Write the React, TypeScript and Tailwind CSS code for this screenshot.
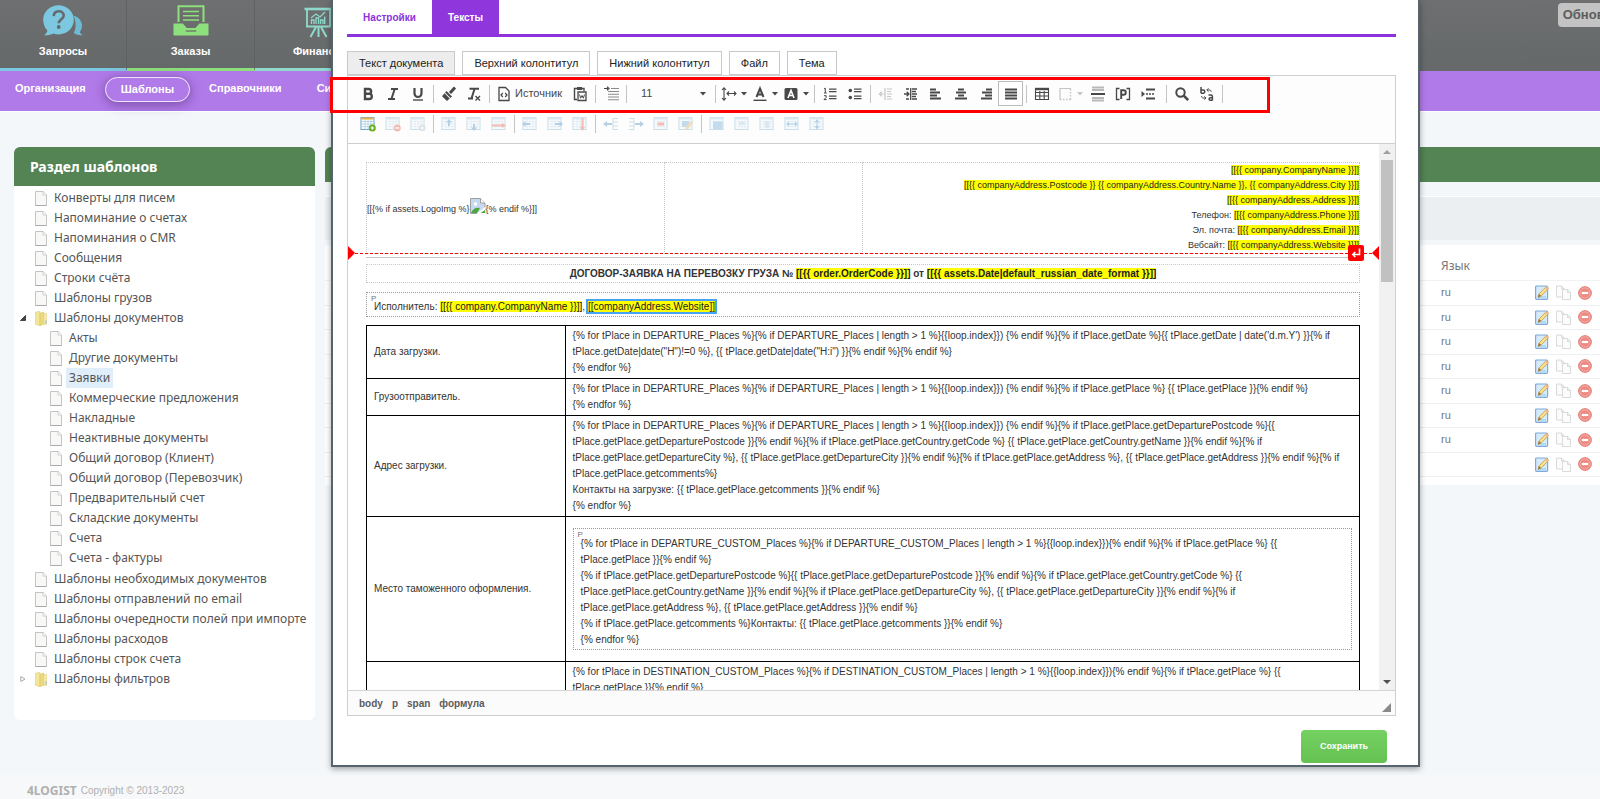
import React, { useState } from 'react';

interface TreeNode {
  label: string;
  open?: boolean;
  folder?: boolean;
  children?: TreeNode[];
}

const TREE: TreeNode[] = [
  { label: 'Конверты для писем' },
  { label: 'Напоминание о счетах' },
  { label: 'Напоминания о CMR' },
  { label: 'Сообщения' },
  { label: 'Строки счёта' },
  { label: 'Шаблоны грузов' },
  {
    label: 'Шаблоны документов',
    folder: true,
    open: true,
    children: [
      { label: 'Акты' },
      { label: 'Другие документы' },
      { label: 'Заявки' },
      { label: 'Коммерческие предложения' },
      { label: 'Накладные' },
      { label: 'Неактивные документы' },
      { label: 'Общий договор (Клиент)' },
      { label: 'Общий договор (Перевозчик)' },
      { label: 'Предварительный счет' },
      { label: 'Складские документы' },
      { label: 'Счета' },
      { label: 'Счета - фактуры' },
    ],
  },
  { label: 'Шаблоны необходимых документов' },
  { label: 'Шаблоны отправлений по email' },
  { label: 'Шаблоны очередности полей при импорте' },
  { label: 'Шаблоны расходов' },
  { label: 'Шаблоны строк счета' },
  { label: 'Шаблоны фильтров', folder: true },
];

const LANGS = ['ru', 'ru', 'ru', 'ru', 'ru', 'ru', 'ru', ''];

const DOC_TABS = ['Текст документа', 'Верхний колонтитул', 'Нижний колонтитул', 'Файл', 'Тема'];

const ADDRESS = [
  { label: '', value: '[[{{ company.CompanyName }}]]' },
  { label: '', value: '[[{{ companyAddress.Postcode }} {{ companyAddress.Country.Name }}, {{ companyAddress.City }}]]' },
  { label: '', value: '[[{{ companyAddress.Address }}]]' },
  { label: 'Телефон: ', value: '[[{{ companyAddress.Phone }}]]' },
  { label: 'Эл. почта: ', value: '[[{{ companyAddress.Email }}]]' },
  { label: 'Вебсайт: ', value: '[[{{ companyAddress.Website }}]]' },
];

const DOC_ROWS = [
  {
    title: 'Дата загрузки.',
    lines: [
      "{% for tPlace in DEPARTURE_Places %}{% if DEPARTURE_Places | length > 1 %}{{loop.index}}) {% endif %}{% if tPlace.getDate %}{{ tPlace.getDate | date('d.m.Y') }}{% if",
      'tPlace.getDate|date("H")!=0 %}, {{ tPlace.getDate|date("H:i") }}{% endif %}{% endif %}',
      '{% endfor %}',
    ],
  },
  {
    title: 'Грузоотправитель.',
    lines: [
      '{% for tPlace in DEPARTURE_Places %}{% if DEPARTURE_Places | length > 1 %}{{loop.index}}) {% endif %}{% if tPlace.getPlace %} {{ tPlace.getPlace }}{% endif %}',
      '{% endfor %}',
    ],
  },
  {
    title: 'Адрес загрузки.',
    lines: [
      '{% for tPlace in DEPARTURE_Places %}{% if DEPARTURE_Places | length > 1 %}{{loop.index}}) {% endif %}{% if tPlace.getPlace.getDeparturePostcode %}{{',
      'tPlace.getPlace.getDeparturePostcode }}{% endif %}{% if tPlace.getPlace.getCountry.getCode %} {{ tPlace.getPlace.getCountry.getName }}{% endif %}{% if',
      'tPlace.getPlace.getDepartureCity %}, {{ tPlace.getPlace.getDepartureCity }}{% endif %}{% if tPlace.getPlace.getAddress %}, {{ tPlace.getPlace.getAddress }}{% endif %}{% if',
      'tPlace.getPlace.getcomments%}',
      'Контакты на загрузке: {{ tPlace.getPlace.getcomments }}{% endif %}',
      '{% endfor %}',
    ],
  },
  {
    title: 'Место таможенного оформления.',
    boxed: true,
    lines: [
      '{% for tPlace in DEPARTURE_CUSTOM_Places %}{% if DEPARTURE_CUSTOM_Places | length > 1 %}{{loop.index}}){% endif %}{% if tPlace.getPlace %} {{',
      'tPlace.getPlace }}{% endif %}',
      '{% if tPlace.getPlace.getDeparturePostcode %}{{ tPlace.getPlace.getDeparturePostcode }}{% endif %}{% if tPlace.getPlace.getCountry.getCode %} {{',
      'tPlace.getPlace.getCountry.getName }}{% endif %}{% if tPlace.getPlace.getDepartureCity %}, {{ tPlace.getPlace.getDepartureCity }}{% endif %}{% if',
      'tPlace.getPlace.getAddress %}, {{ tPlace.getPlace.getAddress }}{% endif %}',
      '{% if tPlace.getPlace.getcomments %}Контакты: {{ tPlace.getPlace.getcomments }}{% endif %}',
      '{% endfor %}',
    ],
  },
  {
    title: '',
    lines: [
      '{% for tPlace in DESTINATION_CUSTOM_Places %}{% if DESTINATION_CUSTOM_Places | length > 1 %}{{loop.index}}){% endif %}{% if tPlace.getPlace %} {{',
      'tPlace.getPlace }}{% endif %}',
    ],
  },
];

/* ---------- icons ---------- */

const Icon = ({ children, dim }: { children: React.ReactNode; dim?: boolean }) => (
  <svg
    viewBox="0 0 16 16"
    className={`size-4 shrink-0 ${dim ? 'opacity-30' : ''}`}
    fill="none"
    stroke="#484848"
    strokeWidth="1.6"
    aria-hidden="true"
  >
    {children}
  </svg>
);

const Caret = ({ dim }: { dim?: boolean }) => (
  <svg viewBox="0 0 6 4" className={`h-1 w-1.5 shrink-0 ${dim ? 'opacity-30' : ''}`} fill="#484848" aria-hidden="true">
    <path d="M0 0h6L3 3.6z" />
  </svg>
);

const PageIcon = () => (
  <svg viewBox="0 0 12 15" className="h-[15px] w-3 shrink-0" aria-hidden="true">
    <path d="M.5.5h7.6l3.4 3.4v10.6H.5z" fill="#f8f8f6" stroke="#c4c4c4" />
    <path d="M8 .8V4h3.3" fill="#fff" stroke="#c4c4c4" strokeWidth=".8" />
    <path d="M.5 14.5h11" stroke="#a9a9a9" />
  </svg>
);

const FolderIcon = () => (
  <svg viewBox="0 0 12 15" className="h-[15px] w-3 shrink-0" aria-hidden="true">
    <path d="M0 1.5 4.8.2v14.6L0 13z" fill="#f3e59a" stroke="#e0cd74" strokeWidth=".6" />
    <path d="M5 2.2 8.6 1v12.2L5 14.6z" fill="#ecd980" stroke="#d9c363" strokeWidth=".6" />
    <path d="M8.8 2.5h2.7v10.8H8.8z" fill="#f6ecb4" stroke="#e0cd74" strokeWidth=".6" />
    <path d="M10.3 9.6h1.4v3h-1.4z" fill="#9cc7dc" />
  </svg>
);

const ChatIcon = () => (
  <svg viewBox="0 0 40 31" className="h-[31px] w-10" aria-hidden="true">
    <path d="M30.5 10.5c5 1.400 8.500 5.500 8.500 10.300 0 2.400-.8 4.400-2.100 6.100.4 1.300 1.300 2.300 2.800 3.300-3 .3-6-.2-8.200-1.600l-.8-.4c2.300-3.800 2.800-11.200-.2-17.700z" fill="#6fb9d3" />
    <path d="M15.500.2C24 .2 30.800 6.600 30.800 14.800S24 29.400 15.500 29.400c-1.800 0-3.400-.2-5-.8-2.600 1.300-6 2-9.800 1.700 2-1.200 3.300-2.800 3.700-4.900C1.600 22.700.2 19 .2 14.800.2 6.600 7 .2 15.500.2z" fill="#7cc8e0" />
    <path d="M10.700 11.100c.2-3 2.200-4.800 5-4.800s5 1.700 5 4.200c0 4-5 4-5 7.700" fill="none" stroke="#666969" strokeWidth="2.600" />
    <circle cx="15.700" cy="22" r="1.900" fill="#666969" />
  </svg>
);

const InboxIcon = () => (
  <svg viewBox="0 0 36 31" className="h-[31px] w-9" aria-hidden="true">
    <path d="M5.500 17V1.200h25V17" fill="none" stroke="#8ee07c" strokeWidth="2" />
    <path d="M10 6.500h16M10 10.700h16M10 15h16" stroke="#8ee07c" strokeWidth="1.400" />
    <path d="M.5 18.500h9.300l4 4.500h8.600l4-4.500h9.100v11.300c0 .4-.3.700-.7.700H1.200c-.4 0-.7-.3-.7-.7z" fill="#8ee07c" />
    <path d="M12.800 26h10.400" stroke="#666969" strokeWidth="1.200" />
  </svg>
);

const BoardIcon = () => (
  <svg viewBox="0 0 29 31" className="mt-0.5 h-[31px] w-[29px]" fill="none" stroke="#8fd9cc" aria-hidden="true">
    <path d="M.5 2h28" strokeWidth="2.600" />
    <path d="M3 3v16.500h23V3" strokeWidth="1.800" />
    <path d="m12 20-5.500 10M14.500 20v10M17 20l5.500 10" strokeWidth="2" />
    <path d="M7.500 17v-4h2.500v4M12 17v-6h2.500v6M16.500 17v-4h2.500v4M20.700 17V9.500" strokeWidth="1.300" />
    <path d="m7 11 5-4 4 3 5-5" strokeWidth="1.200" />
  </svg>
);

const EditIcon = () => (
  <svg viewBox="0 0 14 15" className="h-[15px] w-3.5" aria-hidden="true">
    <rect x=".6" y="1" width="12" height="13.300" rx="1" fill="#d6eafa" stroke="#7da9dc" strokeWidth="1.200" />
    <path d="M3 11h8v2H3z" fill="#a9dcf5" />
    <path d="m3 12.500.9-3.400L10.800 2c.9-.8 2.900.6 2.300 1.900L6.200 11z" fill="#fbe08a" stroke="#c99a4b" strokeWidth=".8" />
    <path d="m3 12.500.9-3.400 2.300 1.900z" fill="#8e744e" />
    <path d="M10.800 2c.9-.8 2.900.6 2.300 1.900l-1 1-2.200-1.900z" fill="#eebb8c" />
  </svg>
);

const CopyIcon = () => (
  <svg viewBox="0 0 15 15" className="size-[15px]" fill="#fcfcfc" stroke="#d6d6d6" strokeWidth=".9" aria-hidden="true">
    <path d="M.5 1h5L8 3.500V12H.5z" />
    <path d="M5.500 1v2.700H8" fill="none" />
    <path d="M6.500 4.500h5L14.500 7.300v7.200h-8z" />
    <path d="M11.500 4.500v3h3" fill="none" />
  </svg>
);

const DeleteIcon = () => (
  <svg viewBox="0 0 14 14" className="size-3.5" aria-hidden="true">
    <circle cx="7" cy="7" r="6.300" fill="#ee8a84" stroke="#dd6f69" />
    <circle cx="7" cy="7" r="5.200" fill="none" stroke="#f7bcb8" strokeWidth=".7" />
    <path d="M3.800 5.900h6.400v2.200H3.800z" fill="#fff" />
  </svg>
);

const GridIcon = ({ active, children }: { active?: boolean; children?: React.ReactNode }) => (
  <svg viewBox="0 0 16 16" className={`size-4 ${active ? '' : 'opacity-35'}`} fill="none" aria-hidden="true">
    <rect x="1" y="1.500" width="13" height="12" fill="#fff" stroke="#6ba3c8" />
    <path d="M1.500 5.500h12M1.500 8h12M1.500 10.700h12M5 3v10.500M8 3v10.500M11 3v10.500" stroke="#a9cbe3" strokeWidth=".8" />
    <path d="M1 1.500h13v2H1z" fill={active ? '#e8b64a' : '#9cc4e0'} />
    {children}
  </svg>
);

/* ---------- toolbar ---------- */

const ToolButton = ({ label, wide, on, children }: { label: string; wide?: boolean; on?: boolean; children: React.ReactNode }) => (
  <button
    type="button"
    aria-label={label}
    title={label}
    className={`flex h-[25px] shrink-0 items-center justify-center gap-1 ${wide ? 'w-[31px]' : 'w-[25px]'} ${
      on ? 'border border-[#bcbcbc] bg-white' : ''
    }`}
  >
    {children}
  </button>
);

const Separator = () => <span className="mx-[2px] h-[18px] w-0.5 shrink-0 border-r border-[#c4c4c4]" />;

const FormatToolbar = () => (
  <div className="flex items-center">
    <ToolButton label="Полужирный">
      <Icon>
        <path d="M5 3v10h4.200a2.600 2.600 0 0 0 0-5.200H5h3.700a2.400 2.400 0 0 0 0-4.800z" strokeWidth="2.400" />
      </Icon>
    </ToolButton>
    <ToolButton label="Курсив">
      <Icon>
        <path d="M6 3h7M3 13h7M9.700 3 6.400 13" strokeWidth="2" />
      </Icon>
    </ToolButton>
    <ToolButton label="Подчеркнутый">
      <Icon>
        <path d="M4.500 2v5.500a3.500 3.500 0 0 0 7 0V2" strokeWidth="2.200" />
        <path d="M3 14h10" strokeWidth="1.400" />
      </Icon>
    </ToolButton>
    <Separator />
    <ToolButton label="Копировать форматирование">
      <Icon>
        <path d="m9 7 5-5.500" strokeWidth="3" />
        <path d="M5.500 5 11 10.500 9.500 12 4 6.500z" fill="#484848" stroke="none" />
        <path d="M3.500 7.300 8.700 12.500 6 15 1 10.200z" fill="#484848" stroke="none" />
      </Icon>
    </ToolButton>
    <ToolButton label="Убрать форматирование">
      <Icon>
        <path d="M3.500 2.800H13M2 12.500h5M8.500 3 5.500 12.500" strokeWidth="2" />
        <path d="m9.500 10 4.500 4.500m0-4.500-4.500 4.500" strokeWidth="1.400" />
      </Icon>
    </ToolButton>
    <Separator />
    <button type="button" className="flex h-[25px] w-[75px] shrink-0 items-center gap-[3px] pl-1 text-[11px] text-[#484848]">
      <Icon>
        <path d="M3 1.500h6.500L13 5v9.500H3z" strokeWidth="1.300" />
        <path d="M6.800 7 5 9l1.800 2M9.200 7 11 9l-1.800 2" strokeWidth="1.200" />
      </Icon>
      Источник
    </button>
    <ToolButton label="Вставить из Word">
      <Icon>
        <path d="M5 13.500H2.500v-11H12V5" strokeWidth="1.400" />
        <path d="M5 1h5v3H5z" fill="#484848" stroke="none" />
        <path d="M6 6h8v8.500H6z" strokeWidth="1.300" />
        <path d="m7.500 8.500 1.100 3.700L10 9.500l1.400 2.700 1.100-3.700" strokeWidth="1" />
      </Icon>
    </ToolButton>
    <Separator />
    <ToolButton label="Красная строка">
      <Icon>
        <path d="M8 2.500h8M5 5.500h11M5 8.200h11M5 11h11M5 13.700h11" stroke="#8b8b8b" strokeWidth="1.100" />
        <path d="M1 2.500h4M4 .8 6 2.500 4 4.200" strokeWidth="1.200" />
      </Icon>
    </ToolButton>
    <Separator />
    <label className="relative flex h-[25px] w-[83px] shrink-0 items-center">
      <span className="sr-only">Размер</span>
      <select className="h-full w-full appearance-none bg-transparent pl-3 text-[11px] text-[#484848] outline-none" defaultValue="11">
        <option>11</option>
        <option>12</option>
        <option>14</option>
      </select>
      <span className="pointer-events-none absolute right-1.5">
        <Caret />
      </span>
    </label>
    <Separator />
    <ToolButton label="Межстрочный интервал" wide>
      <Icon>
        <path d="M3 2v12M1 4l2-2.200L5 4M1 12l2 2.200L5 12" strokeWidth="1.100" />
        <path d="M6 7.500h9M8 5.500 6 7.500l2 2M13 5.500l2 2-2 2" strokeWidth="1.100" />
      </Icon>
      <Caret />
    </ToolButton>
    <ToolButton label="Цвет текста" wide>
      <Icon>
        <path d="M4.500 11 8 2.500 11.500 11M5.500 8.500h5" strokeWidth="2" />
        <path d="M1.500 14.300h13" strokeWidth="1.400" />
      </Icon>
      <Caret />
    </ToolButton>
    <ToolButton label="Цвет фона" wide>
      <Icon>
        <rect x="1.500" y="2" width="13" height="12" rx="1.500" fill="#484848" stroke="none" />
        <path d="M5 12 8 4.500 11 12M6 9.500h4" stroke="#fff" strokeWidth="1.600" />
      </Icon>
      <Caret />
    </ToolButton>
    <Separator />
    <ToolButton label="Нумерованный список">
      <Icon>
        <path d="M7 3.200h7.500M7 5.700h7.500M7 10.200h7.500M7 12.700h7.500" strokeWidth="1.200" />
        <path d="M2 3l1.300-.8V7M2 7h2.700M2 9.700h2.200v1.600L2 13.600h2.700" strokeWidth="1" />
      </Icon>
    </ToolButton>
    <ToolButton label="Маркированный список">
      <Icon>
        <path d="M7 3.200h7.500M7 5.700h7.500M7 10.200h7.500M7 12.700h7.500" strokeWidth="1.200" />
        <circle cx="3.300" cy="4.500" r="1.800" fill="#484848" stroke="none" />
        <circle cx="3.300" cy="11.500" r="1.800" fill="#484848" stroke="none" />
      </Icon>
    </ToolButton>
    <Separator />
    <ToolButton label="Уменьшить отступ">
      <Icon dim>
        <path d="M9 3h5M9 5.500h4M9 8h5M9 10.500h4M9 13h5" strokeWidth="1.200" />
        <path d="M7 2v12M1.500 8H6M3.700 5.700 1.500 8l2.200 2.300" strokeWidth="1.200" />
      </Icon>
    </ToolButton>
    <ToolButton label="Увеличить отступ">
      <Icon>
        <path d="M9 3h5M9 5.500h4M9 8h5M9 10.500h4M9 13h5M3 3h3M3 13h3" strokeWidth="1.400" />
        <path d="M7.700 2v12M1 8h5M3.700 5.700 6 8l-2.300 2.300" strokeWidth="1.300" />
      </Icon>
    </ToolButton>
    <ToolButton label="По левому краю">
      <Icon>
        <path d="M2 3.500h6M2 6.500h10M2 9.500h7M2 12.500h11" strokeWidth="2" />
      </Icon>
    </ToolButton>
    <ToolButton label="По центру">
      <Icon>
        <path d="M5 3.500h6M3 6.500h10M5 9.500h6M2 12.500h12" strokeWidth="2" />
      </Icon>
    </ToolButton>
    <ToolButton label="По правому краю">
      <Icon>
        <path d="M8 3.500h6M4 6.500h10M7 9.500h7M3 12.500h11" strokeWidth="2" />
      </Icon>
    </ToolButton>
    <ToolButton label="По ширине" on>
      <Icon>
        <path d="M2 3.500h12M2 6.500h12M2 9.500h12M2 12.500h12" strokeWidth="2" />
      </Icon>
    </ToolButton>
    <Separator />
    <ToolButton label="Таблица">
      <Icon>
        <path d="M1.500 2.500h13v11h-13zM1.500 6.500h13M1.500 10h13M5.800 5v8.500M10.200 5v8.500" strokeWidth="1.100" />
        <path d="M1 3h14" strokeWidth="2.400" />
      </Icon>
    </ToolButton>
    <ToolButton label="Границы" wide>
      <Icon dim>
        <path d="M3 14V2.500h11" strokeWidth="1.200" />
        <path d="M13.500 3v11M3 13.500h11" strokeWidth="1.400" strokeDasharray="1.500 1.500" />
      </Icon>
      <Caret dim />
    </ToolButton>
    <ToolButton label="Разрыв страницы">
      <Icon>
        <path d="M2 1.500h12M2 4h12M2 12h12M2 14.500h12" stroke="#b9b9b9" strokeWidth="1.800" />
        <path d="M1 8h14" strokeWidth="2" />
      </Icon>
    </ToolButton>
    <ToolButton label="Плейсхолдер">
      <Icon>
        <path d="M4.500 2.500H1.500v11h3M11.500 2.500h3v11h-3" strokeWidth="1.300" />
        <path d="M6.200 13V4.200H8.500a2.300 2.300 0 0 1 0 4.600H6.200" strokeWidth="1.900" />
      </Icon>
    </ToolButton>
    <ToolButton label="Показать блоки">
      <Icon>
        <path d="M6 3.500h9M6 12.500h9" strokeWidth="2" />
        <path d="M6 8h9" strokeWidth="1.400" strokeDasharray="2 1" />
        <path d="M1.500 5v6L5 8z" fill="#484848" stroke="none" />
      </Icon>
    </ToolButton>
    <span className="w-[3px]" />
    <Separator />
    <ToolButton label="Найти">
      <Icon>
        <circle cx="6.500" cy="6.500" r="4.200" strokeWidth="2" />
        <path d="m9.700 9.700 4.500 4.500" strokeWidth="2.600" />
      </Icon>
    </ToolButton>
    <ToolButton label="Заменить">
      <Icon>
        <path d="M2 1v6.300M2 4h2.200a1.600 1.600 0 0 1 0 3.200H2" strokeWidth="1.500" />
        <path d="M9.500 9h2.300c1 0 1.600.5 1.600 1.400v4M13.300 11.800h-2a1.200 1.200 0 0 0 0 2.400h2" strokeWidth="1.500" />
        <path d="M8 4h2.500c1 0 1.700.6 1.700 1.800M9.500 2.300 7.800 4l1.700 1.700M2.500 10c0 1.300.8 2 2 2h2M5.300 10.300 7 12l-1.700 1.700" strokeWidth="1" />
      </Icon>
    </ToolButton>
    <Separator />
  </div>
);

const TABLE_TOOLS: { label: string; icon: React.ReactNode }[][] = [
  [
    {
      label: 'Добавить таблицу',
      icon: (
        <GridIcon active>
          <circle cx="12.300" cy="12" r="3.500" fill="#63b01c" />
          <path d="M10.500 12h3.600M12.300 10.200v3.600" stroke="#fff" strokeWidth="1.200" />
        </GridIcon>
      ),
    },
    {
      label: 'Удалить таблицу',
      icon: (
        <GridIcon>
          <circle cx="12.300" cy="12" r="3.500" fill="#e0442e" />
          <path d="M10.500 12h3.600" stroke="#fff" strokeWidth="1.400" />
        </GridIcon>
      ),
    },
    {
      label: 'Свойства таблицы',
      icon: (
        <GridIcon>
          <circle cx="12.300" cy="12" r="3.300" fill="#aab4bb" />
          <circle cx="12.300" cy="12" r="1.200" fill="#fff" />
        </GridIcon>
      ),
    },
  ],
  [
    { label: 'Строка сверху', icon: <GridIcon><path d="M8 3 5 6.500h2V10h2V6.500h2z" fill="#2f7dbb" /></GridIcon> },
    { label: 'Строка снизу', icon: <GridIcon><path d="M8 15 5 11.500h2V8h2v3.500h2z" fill="#2f7dbb" /></GridIcon> },
    { label: 'Удалить строку', icon: <GridIcon><path d="M1 8.500h10V7l4 2.500-4 2.500v-1.500H1z" fill="#e0442e" /></GridIcon> },
  ],
  [
    { label: 'Столбец слева', icon: <GridIcon><path d="m0 8 3.500-3v2H8v2H3.500v2z" fill="#2f7dbb" /></GridIcon> },
    { label: 'Столбец справа', icon: <GridIcon><path d="m16 8-3.500-3v2H8v2h4.500v2z" fill="#2f7dbb" /></GridIcon> },
    { label: 'Удалить столбец', icon: <GridIcon><path d="M9.500 2h2v9H13l-2.500 4L8 11h1.500z" fill="#e0442e" /></GridIcon> },
  ],
  [
    {
      label: 'Ячейка слева',
      icon: (
        <svg viewBox="0 0 16 16" className="size-4 opacity-35" fill="none" aria-hidden="true">
          <path d="M15 2.500H10v11h5M10 6h5M10 10h5" stroke="#6ba3c8" />
          <path d="M0 8 4 5v2h5v2H4v2z" fill="#2f7dbb" />
        </svg>
      ),
    },
    {
      label: 'Ячейка справа',
      icon: (
        <svg viewBox="0 0 16 16" className="size-4 opacity-35" fill="none" aria-hidden="true">
          <path d="M1 2.500h5v11H1M1 6h5M1 10h5" stroke="#6ba3c8" />
          <path d="m16 8-4-3v2H7v2h5v2z" fill="#2f7dbb" />
        </svg>
      ),
    },
    { label: 'Удалить ячейку', icon: <GridIcon><path d="M4.500 6.500h6.500v3H4.500z" fill="#e0442e" /></GridIcon> },
    {
      label: 'Свойства ячейки',
      icon: (
        <GridIcon>
          <path d="M4 5h7v6H4z" fill="#5d9fd0" />
          <path d="m7 14 1-3 5-6 2 1.700L10 13z" fill="#d9a441" />
        </GridIcon>
      ),
    },
  ],
  [
    { label: 'Объединить ячейки', icon: <GridIcon><path d="M4 5.500h9.500V13H4z" fill="#5d9fd0" /></GridIcon> },
    { label: 'Объединить вправо', icon: <GridIcon><path d="M5 6h6v3H5z" fill="#9cc4e0" /></GridIcon> },
    { label: 'Объединить вниз', icon: <GridIcon><path d="M6 5h4v7H6z" fill="#9cc4e0" /></GridIcon> },
    { label: 'Разделить по горизонтали', icon: <GridIcon><path d="m2 8 3-2.500v5zM14 8l-3-2.500v5zM5 7.500h6v1H5z" fill="#2f7dbb" /></GridIcon> },
    { label: 'Разделить по вертикали', icon: <GridIcon><path d="M8 3 5.500 6.500h5zM8 13.500 5.500 10h5zM7.500 6h1v4h-1z" fill="#2f7dbb" /></GridIcon> },
  ],
];

const TableToolbar = () => (
  <div className="flex items-center">
    {TABLE_TOOLS.map((group, i) => (
      <React.Fragment key={i}>
        {i > 0 && <Separator />}
        {group.map((tool) => (
          <ToolButton key={tool.label} label={tool.label}>
            {tool.icon}
          </ToolButton>
        ))}
      </React.Fragment>
    ))}
  </div>
);

/* ---------- background page ---------- */

const TopNav = () => (
  <header>
    <nav className="flex h-[71px] bg-linear-to-b from-[#6e6f70] to-[#656969] text-[11px] font-bold text-white">
      <a href="#requests" className="flex w-[127px] shrink-0 flex-col items-center border-r border-b-[3px] border-r-[#5f6263] border-b-[#7cc8e0] pt-[5px]">
        <ChatIcon />
        <span className="mt-[7px]">Запросы</span>
      </a>
      <a href="#orders" className="flex w-[128px] shrink-0 flex-col items-center border-r border-b-[3px] border-r-[#5f6263] border-b-[#8ee07c] pt-[5px]">
        <InboxIcon />
        <span className="mt-[7px]">Заказы</span>
      </a>
      <a href="#finance" className="flex w-[127px] shrink-0 flex-col items-center border-b-[3px] border-b-[#8fd9cc] pt-[5px]">
        <BoardIcon />
        <span className="mt-[5px]">Финансы</span>
      </a>
      <button type="button" className="mt-[3px] -mr-8 ml-auto h-6 shrink-0 rounded-sm bg-[#c3c3c3] px-[5px] text-[13px] text-[#5c5c5c]">
        Обновить
      </button>
    </nav>
    <nav className="flex h-10 items-start gap-[19px] bg-[#b17ae9] pt-1.5 pl-[15px] text-[11px] leading-[23px] font-bold text-white">
      <a href="#org">Организация</a>
      <a href="#templates" className="h-[25px] rounded-full border border-white/80 px-[15px] shadow-[0_2px_12px_rgba(60,30,90,0.5)]">
        Шаблоны
      </a>
      <a href="#dict">Справочники</a>
      <a href="#system" className="ml-4">Система</a>
    </nav>
  </header>
);

const TreeItem = ({ node, selected, onSelect }: { node: TreeNode; selected: string; onSelect: (label: string) => void }) => (
  <li>
    <div className="flex h-5 items-center">
      <span className="flex w-[15px] shrink-0">
        {node.folder && (
          <svg viewBox="0 0 6 6" className="size-1.5" aria-hidden="true">
            {node.open ? <path d="M5.500.5v5H.5z" fill="#444" stroke="#444" /> : <path d="M.8.5v5L5 3z" fill="#fff" stroke="#aaa" />}
          </svg>
        )}
      </span>
      {node.folder ? <FolderIcon /> : <PageIcon />}
      <button
        type="button"
        onClick={() => onSelect(node.label)}
        className={`ml-1 h-5 px-[3px] whitespace-nowrap ${selected === node.label ? 'bg-[#e0eefa]' : ''}`}
      >
        {node.label}
      </button>
    </div>
    {node.children && (
      <ul className="pb-px pl-[15px]">
        {node.children.map((child) => (
          <TreeItem key={child.label} node={child} selected={selected} onSelect={onSelect} />
        ))}
      </ul>
    )}
  </li>
);

const TemplateTree = () => {
  const [selected, setSelected] = useState('Заявки');
  return (
    <aside className="w-[301px] shrink-0 rounded-md bg-white pb-[31px] font-['Noto_Sans',sans-serif]">
      <h2 className="flex h-[39px] items-center rounded-t-md bg-[#548354] pl-4 text-sm font-bold text-white">Раздел шаблонов</h2>
      <ul className="pt-[2px] pl-[6px] text-xs text-[#555]">
        {TREE.map((node) => (
          <TreeItem key={node.label} node={node} selected={selected} onSelect={setSelected} />
        ))}
      </ul>
    </aside>
  );
};

const TemplateTable = () => (
  <section className="-mr-[10px] min-w-0 flex-1">
    <div className="h-[35px] rounded-t-md bg-[#548354]" />
    <div className="mt-[14px] h-11 border-t border-white bg-[#ebeff2]" />
    <div className="mt-[5px] bg-white pb-2">
      <table className="w-full border-collapse font-['Noto_Sans',sans-serif] text-xs text-[#777]">
        <thead>
          <tr className="h-[35px] border-b border-[#f0f3f5]">
            <th />
            <th className="w-[94px] pt-2 text-left font-normal">Язык</th>
            <th className="w-[75px]" />
          </tr>
        </thead>
        <tbody>
          {LANGS.map((lang, i) => (
            <tr key={i} className="h-[25px] border-b border-[#edf0f2] even:h-6">
              <td />
              <td className="font-['Liberation_Sans',Arial,sans-serif] text-[11px]">{lang}</td>
              <td>
                <div className="flex items-center gap-[7px]">
                  <button type="button" aria-label="Изменить"><EditIcon /></button>
                  <button type="button" aria-label="Копировать"><CopyIcon /></button>
                  <button type="button" aria-label="Удалить"><DeleteIcon /></button>
                </div>
              </td>
            </tr>
          ))}
        </tbody>
      </table>
    </div>
  </section>
);

/* ---------- document being edited ---------- */

const Var = ({ children }: { children: React.ReactNode }) => <mark className="bg-[#ff0] text-[#222]">{children}</mark>;

const Document = () => (
  <div className="relative min-w-0 flex-1 overflow-hidden pt-[18px] pr-[19px] pl-[18px] text-[#333]">
    <table className="w-full table-fixed border-collapse border border-dotted border-[#c8c8c8] text-[9px] leading-[15px]">
      <tbody>
        <tr>
          <td className="w-[30%] border border-dotted border-[#c8c8c8] pt-[3px]">
            <div className="flex items-center whitespace-pre">
              {'[[{% if assets.LogoImg %}'}
              <svg viewBox="0 0 16 16" className="mb-2 size-4" aria-hidden="true">
                <path d="M.5.5h10l4.500 4.500v10.500H.5z" fill="#c5d9f2" stroke="#a0a0a0" />
                <path d="M10.500.5V5H15" fill="#fff" stroke="#a0a0a0" />
                <circle cx="5.500" cy="6" r="1.800" fill="#fff" />
                <path d="M1 15c1.500-4 5-6 9-5l-3 5z" fill="#4ca83c" />
                <path d="m7 15.500 8.500-7V16H7z" fill="#fff" />
                <path d="m10.500 15 4.500-3v3z" fill="#4ca83c" />
              </svg>
              {'{% endif %}]]'}
            </div>
          </td>
          <td className="w-[20%] border border-dotted border-[#c8c8c8]" />
          <td className="border border-dotted border-[#c8c8c8] text-right">
            {ADDRESS.map((row) => (
              <p key={row.value}>
                {row.label}
                <Var>{row.value}</Var>
              </p>
            ))}
          </td>
        </tr>
      </tbody>
    </table>

    {/* "insert paragraph here" line over the content */}
    <div className="absolute top-[101px] right-0 left-0 flex h-4 items-center">
      <span className="border-y-[7px] border-l-[7px] border-y-transparent border-l-[#f00]" />
      <span className="flex-1 border-t border-dashed border-[#f00]" />
      <button type="button" aria-label="Вставить абзац" className="flex size-4 items-center justify-center rounded-xs bg-[#f00]">
        <svg viewBox="0 0 10 10" className="size-2.5" fill="none" stroke="#fff" strokeWidth="1.600" aria-hidden="true">
          <path d="M8.500.5v6H2M4.300 4 1.800 6.500 4.300 9" />
        </svg>
      </button>
      <span className="w-2 border-t border-dashed border-[#f00]" />
      <span className="border-y-[7px] border-r-[7px] border-y-transparent border-r-[#f00]" />
    </div>

    <hr className="mt-[3px] border-[#c4c4c4]" />
    <p className="mt-[6px] border border-dotted border-[#c8c8c8] text-center text-[10px] leading-[17px] font-bold">
      ДОГОВОР-ЗАЯВКА НА ПЕРЕВОЗКУ ГРУЗА № <Var>{'[[{{ order.OrderCode }}]]'}</Var> от{' '}
      <Var>{'[[{{ assets.Date|default_russian_date_format }}]]'}</Var>
    </p>
    <div className="relative mt-[9px] border border-dotted border-[#999] pt-[6px] pb-px pl-[7px] text-[10px] leading-4">
      <span className="absolute top-px left-1 text-[8px] leading-[9px] text-[#777]">P</span>
      Исполнитель: <Var>{'[[{{ company.CompanyName }}]]'}</Var>,{' '}
      <span className="outline-2 outline-[#47a4f5]">
        <Var>{'[[companyAddress.Website]]'}</Var>
      </span>
    </div>

    <table className="mt-2 w-full table-fixed border-collapse border border-black text-[10px] leading-4">
      <tbody>
        {DOC_ROWS.map((row, i) => (
          <tr key={i}>
            <td className="w-[20%] border border-black px-[7px] py-[2px]">{row.title}</td>
            <td className="border border-black px-[7px] py-[2px] whitespace-nowrap">
              {row.boxed ? (
                <div className="relative mt-[9px] mb-[9px] border border-dotted border-[#999] pt-[7px] pb-px pl-[7px]">
                  <span className="absolute top-px left-1 text-[8px] leading-[9px] text-[#777]">P</span>
                  {row.lines.map((line, k) => (
                    <p key={k}>{line}</p>
                  ))}
                </div>
              ) : (
                row.lines.map((line, k) => <p key={k}>{line}</p>)
              )}
            </td>
          </tr>
        ))}
      </tbody>
    </table>
  </div>
);

const Scrollbar = () => (
  <div className="flex w-4 shrink-0 flex-col items-center bg-[#f1f1f1]">
    <span className="flex h-4 items-center">
      <svg viewBox="0 0 8 4" className="h-1 w-2" aria-hidden="true"><path d="M0 4h8L4 0z" fill="#a0a0a0" /></svg>
    </span>
    <span className="h-[122px] w-3 bg-[#c1c1c1]" />
    <span className="mt-auto flex h-4 items-center">
      <svg viewBox="0 0 8 4" className="h-1 w-2" aria-hidden="true"><path d="M0 0h8L4 4z" fill="#505050" /></svg>
    </span>
  </div>
);

const EditorDialog = () => {
  const [tab, setTab] = useState(DOC_TABS[0]);
  return (
    <div
      role="dialog"
      aria-label="Тексты"
      className="absolute top-0 right-[180px] left-[331px] border-2 border-t-0 border-[#55636f] bg-white pr-[22px] pb-[2px] pl-[14px] shadow-[0_2px_6px_rgba(0,0,0,0.35)]"
    >
      <div className="flex h-[37px] border-b-[3px] border-[#8c33dc] text-[10px] font-bold">
        <button type="button" className="h-[34px] w-[85px] text-[#8c33dc]">Настройки</button>
        <button type="button" className="h-[34px] w-[67px] bg-[#8f37dc] text-white">Тексты</button>
      </div>

      <div className="mt-[14px] flex gap-[7px] text-[11px]">
        {DOC_TABS.map((name) => (
          <button
            key={name}
            type="button"
            onClick={() => setTab(name)}
            className={`h-6 border border-[#c9c9c9] px-[11px] text-[#222] ${tab === name ? 'bg-[#ededed]' : 'bg-white'}`}
          >
            {name}
          </button>
        ))}
      </div>

      <div className="border border-[#cfcfcf]">
        <div className="flex h-[68px] flex-col gap-[5px] border-b border-[#cfcfcf] bg-[#fdfdfd] pt-[5px] pl-[7px]">
          <FormatToolbar />
          <TableToolbar />
        </div>
        <div className="flex h-[546px]">
          <Document />
          <Scrollbar />
        </div>
        <div className="flex h-[25px] items-center justify-between border-t border-[#d5d5d5] bg-[#fbfbfb] pr-1 pl-[11px] text-[10px] font-bold text-[#5c5c5c]">
          <div className="flex gap-[9px]">
            <a href="#body">body</a>
            <a href="#p">p</a>
            <a href="#span">span</a>
            <a href="#formula">формула</a>
          </div>
          <svg viewBox="0 0 9 9" className="mt-2 size-[9px]" aria-hidden="true"><path d="M9 0v9H0z" fill="#8a8a8a" /></svg>
        </div>
      </div>

      <div className="flex justify-end pt-[14px] pr-[9px]">
        <button type="button" className="h-[33px] w-[86px] rounded-sm bg-linear-to-b from-[#76d163] to-[#64c152] text-[9px] font-bold text-white">
          Сохранить
        </button>
      </div>
    </div>
  );
};

export default function App() {
  return (
    <div className="relative flex h-screen flex-col overflow-hidden bg-[#f3f7fa] font-['Liberation_Sans',Arial,sans-serif]">
      <TopNav />
      <main className="flex items-start gap-[10px] border-t border-white pt-[35px] pl-[14px]">
        <TemplateTree />
        <TemplateTable />
      </main>
      <footer className="mt-auto flex h-6 items-start gap-1 bg-[#f6f8f9] pt-2 pl-[27px] leading-4 text-[#b0b0b0]">
        <strong className="font-['Noto_Sans',sans-serif] text-xs">4LOGIST</strong>
        <span className="text-[10px]">Copyright © 2013-2023</span>
      </footer>
      <EditorDialog />
      <div className="pointer-events-none absolute top-[77px] left-[330px] h-9 w-[940px] border-[3px] border-[#f00]" />
    </div>
  );
}
